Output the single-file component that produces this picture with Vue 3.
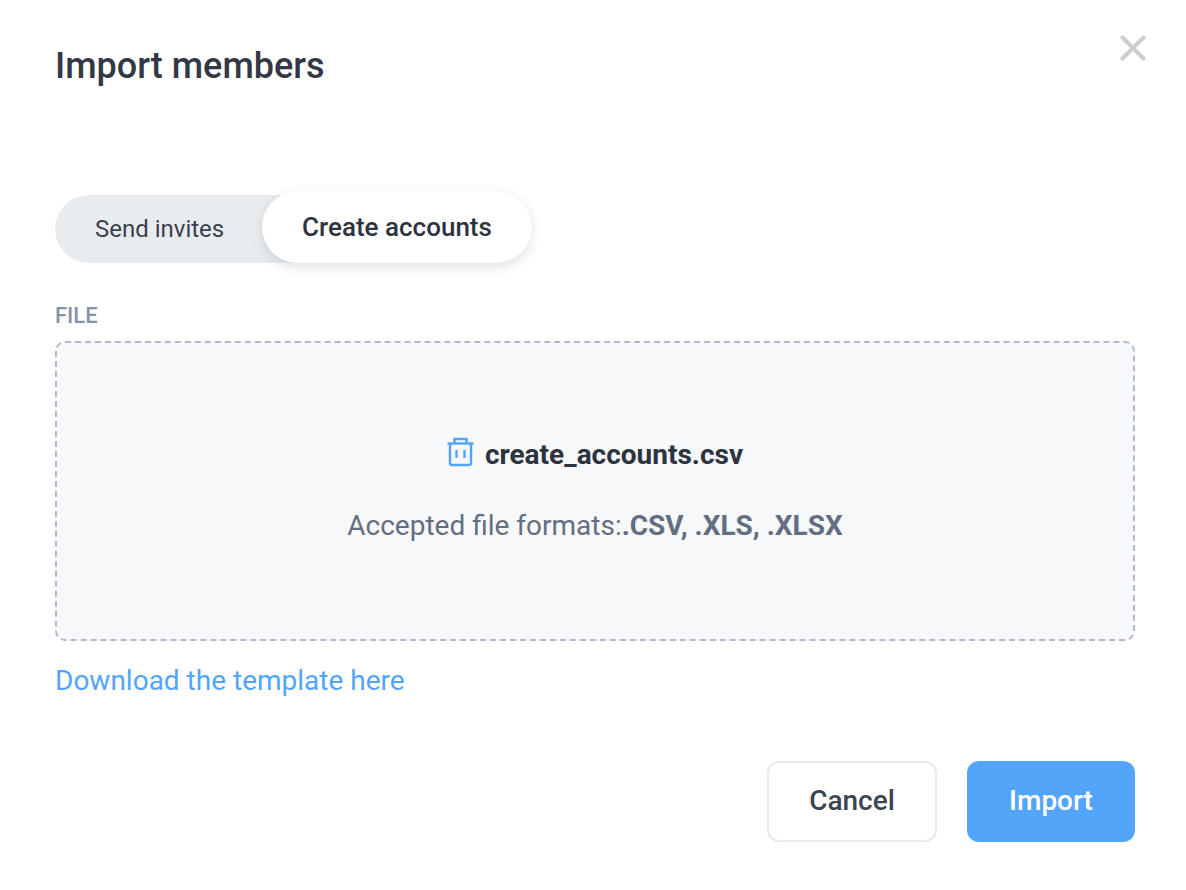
<script setup>
const formats = '.CSV, .XLS, .XLSX'
</script>

<template>
  <div class="modal">
    <button class="close" aria-label="Close">
      <svg width="26" height="26" viewBox="0 0 26 26"><path d="M2.5 2.5 L23.5 23.5 M23.5 2.5 L2.5 23.5" stroke="#cdcdcd" stroke-width="4" stroke-linecap="round" fill="none" /></svg>
    </button>
    <h1 class="title">Import members</h1>
    <div class="toggle">
      <div class="track">Send invites</div>
      <div class="pill">Create accounts</div>
    </div>
    <div class="label">FILE</div>
    <div class="drop">
      <div class="file">
        <svg class="trash" width="27" height="30" viewBox="0 0 27 30" fill="none" stroke="#53a5f9" stroke-width="2.4">
          <path d="M0.5 6.5 H26.5" />
          <path d="M7.5 6.5 V2 H19.5 V6.5" />
          <path d="M3 6.5 V26 Q3 28 5 28 H22 Q24 28 24 26 V6.5" />
          <path d="M9.5 13 V21 M17.5 13 V21" />
        </svg>
        <span>create_accounts.csv</span>
      </div>
      <div class="formats">Accepted file formats:<b>{{ formats }}</b></div>
    </div>
    <a class="link">Download the template here</a>
    <div class="actions">
      <button class="btn cancel">Cancel</button>
      <button class="btn import">Import</button>
    </div>
  </div>
</template>

<style scoped>
.modal {
  position: relative;
  box-sizing: border-box;
  width: 1186px;
  height: 890px;
  padding: 46px 51px 0 55px;
  background: #fff;
  font-family: Roboto, "Liberation Sans", sans-serif;
  color: #2d333f;
  overflow: hidden;
}
.close {
  position: absolute;
  top: 35px;
  left: 1120px;
  width: 26px;
  height: 26px;
  padding: 0;
  border: 0;
  background: none;
  line-height: 0;
}
.title {
  margin: 0;
  font-size: 36px;
  line-height: 40px;
  font-weight: 500;
  color: #323844;
}
.toggle {
  display: flex;
  align-items: flex-end;
  margin-top: 105px;
}
.track {
  box-sizing: border-box;
  width: 280px;
  height: 68px;
  padding-left: 40px;
  border-radius: 34px;
  background: #e9ecef;
  font-size: 24px;
  line-height: 68px;
  color: #3a404c;
}
.pill {
  width: 270px;
  height: 72px;
  margin-left: -73px;
  border-radius: 36px;
  background: #fff;
  box-shadow: 0 4px 12px rgba(30, 40, 60, 0.14);
  font-size: 26px;
  font-weight: 500;
  line-height: 73px;
  text-align: center;
}
.label {
  margin-top: 41px;
  font-size: 22px;
  line-height: 24px;
  font-weight: 500;
  color: #8792a8;
}
.drop {
  box-sizing: border-box;
  display: flex;
  flex-direction: column;
  align-items: center;
  height: 300px;
  margin-top: 13px;
  padding-top: 94px;
  border: 2px dashed #b0b9cf;
  border-radius: 10px;
  background: #f6f8fa;
}
.file {
  display: flex;
  align-items: center;
  gap: 11px;
  height: 34px;
  font-size: 28px;
  font-weight: 700;
}
.trash {
  margin-top: -4px;
}
.formats {
  margin-top: 40px;
  font-size: 28px;
  line-height: 30px;
  color: #636e80;
}
.formats b {
  font-weight: 700;
}
.link {
  display: block;
  margin-top: 24px;
  font-size: 28px;
  line-height: 32px;
  color: #53a5f9;
}
.actions {
  display: flex;
  justify-content: flex-end;
  gap: 30px;
  margin-top: 64px;
}
.btn {
  box-sizing: border-box;
  height: 81px;
  padding: 0 0 2px;
  border-radius: 12px;
  font-family: inherit;
  font-size: 28px;
  font-weight: 500;
}
.cancel {
  width: 170px;
  border: 2px solid #e7eaee;
  background: #fff;
  color: #3d4452;
}
.import {
  width: 168px;
  border: 0;
  background: #53a5f9;
  color: #fff;
}
</style>
